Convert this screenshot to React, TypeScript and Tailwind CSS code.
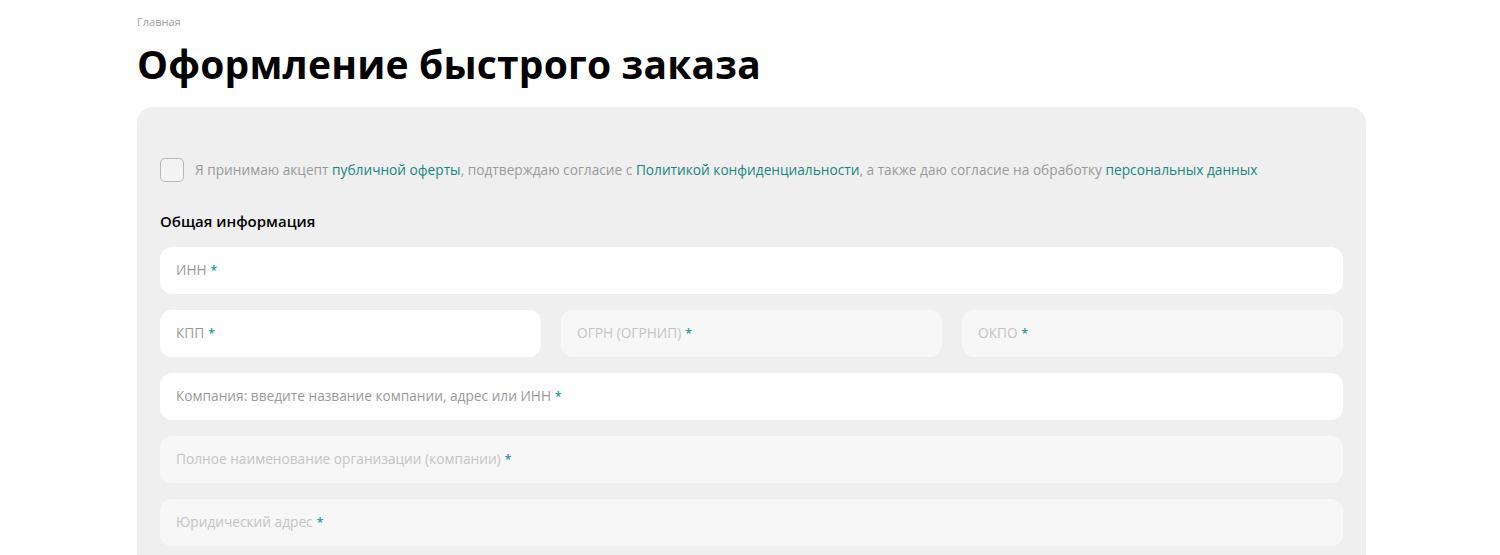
import React from "react";

const font = { fontFamily: '"Open Sans", "Noto Sans", sans-serif' };

function Field({
    label,
    disabled = false,
    className = "",
}: {
    label: string;
    disabled?: boolean;
    className?: string;
}) {
    return (
        <div
            className={`h-[47px] rounded-[12px] flex items-center px-4 text-[13.7px] ${
                disabled ? "bg-[#f7f7f7] text-[#c4c4c4]" : "bg-white text-[#9a9a9a]"
            } ${className}`}
        >
            {label}
            <span className="ml-[4px] text-[12px] font-semibold text-[#1a9a8e]">*</span>
        </div>
    );
}

export default function App() {
    return (
        <div className="min-h-screen bg-white" style={font}>
            <div className="w-[1229px] ml-[137px] pt-[15px]">
                <div className="text-[11px] text-[#a0a0a0] leading-[14px]">Главная</div>
                <h1 className="mt-[10px] text-[39px] leading-[50px] font-bold text-black tracking-[0.2px]">
                    Оформление быстрого заказа
                </h1>
                <div className="mt-[18px] bg-[#efefef] rounded-[16px] px-[23px] pt-[51px] pb-10">
                    <div className="flex items-center gap-[11px]">
                        <div className="w-6 h-6 rounded-[5px] border border-[#b8b8b8] bg-[#f4f4f4] shrink-0" />
                        <p className="text-[13.7px] text-[#9a9a9a]">
                            Я принимаю акцепт{" "}
                            <a className="text-[#17877f]">публичной оферты</a>, подтверждаю согласие с{" "}
                            <a className="text-[#17877f]">Политикой конфиденциальности</a>, а также даю согласие на
                            обработку <a className="text-[#17877f]">персональных данных</a>
                        </p>
                    </div>
                    <h2 className="mt-[29px] text-[15px] font-semibold text-black leading-5">Общая информация</h2>
                    <div className="mt-[16px] flex flex-col gap-4">
                        <Field label="ИНН" />
                        <div className="grid grid-cols-3 gap-5">
                            <Field label="КПП" />
                            <Field label="ОГРН (ОГРНИП)" disabled />
                            <Field label="ОКПО" disabled />
                        </div>
                        <Field label="Компания: введите название компании, адрес или ИНН" />
                        <Field label="Полное наименование организации (компании)" disabled />
                        <Field label="Юридический адрес" disabled />
                    </div>
                </div>
            </div>
        </div>
    );
}
